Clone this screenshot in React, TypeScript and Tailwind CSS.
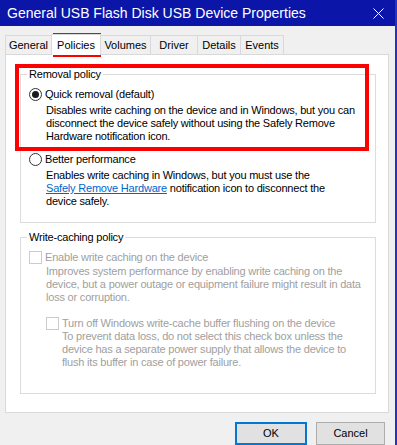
import type { ReactNode } from "react";

const ui = "font-['Liberation_Sans',Arial,sans-serif]";

type TabItem = { label: string; width: string; selected?: boolean };

const tabs: TabItem[] = [
  { label: "General", width: "w-[47px]" },
  { label: "Policies", width: "w-[50px]", selected: true },
  { label: "Volumes", width: "w-[51px]" },
  { label: "Driver", width: "w-[48px]" },
  { label: "Details", width: "w-[44px]" },
  { label: "Events", width: "w-[44px]" }
];

function Radio({ checked }: { checked?: boolean }) {
  return (
    <span className="flex h-[13px] w-[13px] shrink-0 items-center justify-center rounded-full border border-[#333333] bg-white">
      {checked ? <span className="h-[7px] w-[7px] rounded-full bg-[#1a1a1a]" /> : null}
    </span>
  );
}

function Checkbox() {
  return <span className="h-[13px] w-[13px] shrink-0 border border-[#cccccc] bg-white" />;
}

function GroupBox({
  title,
  className,
  children
}: {
  title: string;
  className?: string;
  children?: ReactNode;
}) {
  return (
    <div className={`ml-[14px] w-[356px] border border-[#dcdcdc] ${className || ""}`}>
      <div className="-mt-[8px] ml-[6px] w-fit bg-white px-[2px] leading-[14px] text-black">{title}</div>
      {children}
    </div>
  );
}

export default function App() {
  return (
    <div className={`relative h-[445px] w-[397px] overflow-hidden border-r-2 border-[#2433c4] bg-[#f0f0f0] text-[11px] ${ui}`}>
      <div className="flex h-[26px] items-center justify-between bg-[#0b15a8] pl-[7px] pr-[10px] text-[14px] text-white">
        <span>General USB Flash Disk USB Device Properties</span>
        <svg width="11" height="11" viewBox="0 0 11 11" className="mr-[1px]">
          <path d="M0.5 0.5 L10.5 10.5 M10.5 0.5 L0.5 10.5" stroke="white" strokeWidth="1" />
        </svg>
      </div>

      <div className="ml-[5px] mt-[10px] flex h-[18px] items-end">
        {tabs.map((tab) =>
          tab.selected ? (
            <div
              key={tab.label}
              className={`relative z-10 -mb-px -ml-px flex h-[21px] ${tab.width} items-center justify-center border border-b-0 border-[#d9d9d9] bg-white`}
            >
              {tab.label}
            </div>
          ) : (
            <div
              key={tab.label}
              className={`-ml-px flex h-[19px] first:ml-0 ${tab.width} items-center justify-center border border-b-0 border-[#d9d9d9] bg-[#f0f0f0]`}
            >
              {tab.label}
            </div>
          )
        )}
      </div>

      <div className="ml-[5px] h-[359px] w-[384px] border border-[#d9d9d9] bg-white pt-[19px] tracking-[-0.2px]">
        <GroupBox title="Removal policy" className="pb-[14px]">
          <div className="ml-[8px] mt-[6px] flex items-center gap-[3px] leading-[14px]">
            <Radio checked />
            <span>Quick removal (default)</span>
          </div>
          <p className="ml-[25px] mt-[3px] leading-[13px]">
            Disables write caching on the device and in Windows, but you can
            <br />
            disconnect the device safely without using the Safely Remove
            <br />
            Hardware notification icon.
          </p>
          <div className="ml-[8px] mt-[9px] flex items-center gap-[3px] leading-[14px]">
            <Radio />
            <span>Better performance</span>
          </div>
          <p className="ml-[25px] mt-[3px] leading-[13px]">
            Enables write caching in Windows, but you must use the
            <br />
            <span className="text-[#0066cc] underline">Safely Remove Hardware</span> notification icon to disconnect the
            <br />
            device safely.
          </p>
        </GroupBox>

        <GroupBox title="Write-caching policy" className="mt-[14px] pb-[24px]">
          <div className="ml-[8px] mt-[6px] flex items-center gap-[3px] leading-[14px] text-[#a0a0a0]">
            <Checkbox />
            <span>Enable write caching on the device</span>
          </div>
          <p className="ml-[25px] mt-[1px] leading-[13px] text-[#a0a0a0]">
            Improves system performance by enabling write caching on the
            <br />
            device, but a power outage or equipment failure might result in data
            <br />
            loss or corruption.
          </p>
          <div className="ml-[25px] mt-[12px] flex items-center gap-[3px] leading-[14px] text-[#a0a0a0]">
            <Checkbox />
            <span>Turn off Windows write-cache buffer flushing on the device</span>
          </div>
          <p className="ml-[41px] leading-[13px] text-[#a0a0a0]">
            To prevent data loss, do not select this check box unless the
            <br />
            device has a separate power supply that allows the device to
            <br />
            flush its buffer in case of power failure.
          </p>
        </GroupBox>
      </div>

      <div className="mt-[9px] flex justify-end gap-[9px] pr-[10px]">
        <button className="flex h-[23px] w-[72px] items-center justify-center border-2 border-[#0078d7] bg-[#e1e1e1] text-[11px] text-black">
          OK
        </button>
        <button className="flex h-[23px] w-[69px] items-center justify-center border border-[#adadad] bg-[#e1e1e1] text-[11px] text-black">
          Cancel
        </button>
      </div>

      {/* red annotation boxes */}
      <div className="absolute left-[53px] top-[33px] h-[24px] w-[48px] border-4 border-[#ff0000]" />
      <div className="absolute left-[15px] top-[64px] h-[87px] w-[354px] border-4 border-[#ff0000]" />
    </div>
  );
}
